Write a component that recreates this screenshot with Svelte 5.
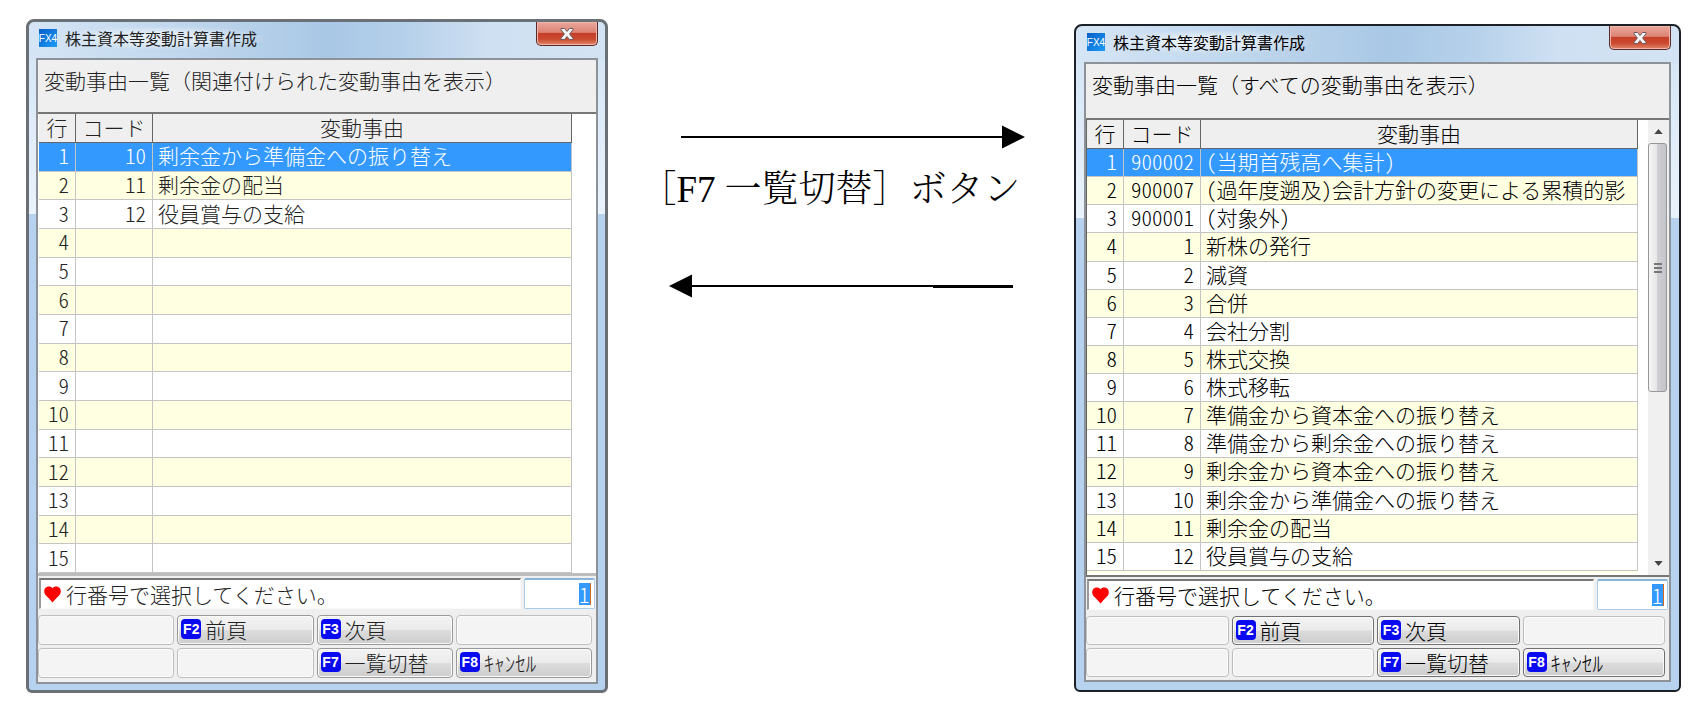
<script>
  const linked = [
    ['10', '剰余金から準備金への振り替え'],
    ['11', '剰余金の配当'],
    ['12', '役員賞与の支給']
  ];
  const all = [
    ['900002', '(当期首残高へ集計)'],
    ['900007', '(過年度遡及)会計方針の変更による累積的影'],
    ['900001', '(対象外)'],
    ['1', '新株の発行'],
    ['2', '減資'],
    ['3', '合併'],
    ['4', '会社分割'],
    ['5', '株式交換'],
    ['6', '株式移転'],
    ['7', '準備金から資本金への振り替え'],
    ['8', '準備金から剰余金への振り替え'],
    ['9', '剰余金から資本金への振り替え'],
    ['10', '剰余金から準備金への振り替え'],
    ['11', '剰余金の配当'],
    ['12', '役員賞与の支給']
  ];
  const pad = (rows) => Array.from({ length: 15 }, (_, i) => rows[i] ?? ['', '']);

  const windows = [
    { id: 'linked', heading: '変動事由一覧（関連付けられた変動事由を表示）', rows: pad(linked), scroll: false },
    { id: 'all', heading: '変動事由一覧（すべての変動事由を表示）', rows: pad(all), scroll: true }
  ];
  const keys = [
    null, ['F2', '前頁'], ['F3', '次頁'], null,
    null, null, ['F7', '一覧切替'], ['F8', 'ｷｬﾝｾﾙ']
  ];
</script>

{#snippet dialog(w)}
  <section class="window {w.id}">
    <header class="titlebar">
      <svg class="app" viewBox="0 0 18 18" aria-hidden="true">
        <defs>
          <linearGradient id="app-{w.id}" x1="0" y1="0" x2="1" y2="1">
            <stop offset="0" stop-color="#0a5fc8" />
            <stop offset="1" stop-color="#1b9bf5" />
          </linearGradient>
        </defs>
        <rect width="18" height="18" fill="url(#app-{w.id})" />
        <text x="9" y="13" text-anchor="middle" font-size="10" fill="#fff">FX4</text>
      </svg>
      <span class="title">株主資本等変動計算書作成</span>
      <button class="close" aria-label="閉じる">
        <svg viewBox="0 0 16 14" aria-hidden="true">
          <path d="M2 1.500h3.600L8 4.500l2.400-3H14v1.300L10.600 7 14 11.200v1.300h-3.600L8 9.500l-2.400 3H2v-1.300L5.400 7 2 2.800z" fill="#f4f4f4" stroke="#6b5a62" stroke-width="1" />
        </svg>
      </button>
    </header>
    <div class="panel">
      <h2>{w.heading}</h2>
      <div class="list">
        <table>
          <colgroup><col class="c-row" /><col class="c-code" /><col /></colgroup>
          <thead>
            <tr><th>行</th><th>コード</th><th>変動事由</th></tr>
          </thead>
          <tbody>
            {#each w.rows as row, i}
              <tr class:selected={i === 0}>
                <td class="num">{i + 1}</td>
                <td class="num">{row[0]}</td>
                <td class="reason">{row[1]}</td>
              </tr>
            {/each}
          </tbody>
        </table>
        {#if w.scroll}
          <div class="scroll">
            <button aria-label="上へ"><svg viewBox="0 0 10 6"><path d="M0 6 5 0l5 6z" fill="#444" /></svg></button>
            <div class="track">
              <div class="thumb"><i></i><i></i><i></i></div>
            </div>
            <button aria-label="下へ"><svg viewBox="0 0 10 6"><path d="M0 0h10L5 6z" fill="#444" /></svg></button>
          </div>
        {/if}
      </div>
      <div class="prompt">
        <label class="message" for="line-{w.id}">
          <svg viewBox="0 0 17 17" aria-hidden="true">
            <path d="M8.500 16.500 5 12.500 1.500 9C-.2 7-.2 3.500 1.500 1.800 3.600-.2 7-.1 8.500 2.300 10-.1 13.400-.2 15.500 1.800 17.200 3.500 17.200 7 15.500 9L12 12.500z" fill="#f00" />
          </svg>
          行番号で選択してください。
        </label>
        <div class="entry"><input id="line-{w.id}" type="text" value="1" /></div>
      </div>
      <div class="keys">
        {#each keys as key}
          {#if key}
            <button class="key"><b>{key[0]}</b>{key[1]}</button>
          {:else}
            <button class="key" disabled aria-label="未割当"></button>
          {/if}
        {/each}
      </div>
    </div>
  </section>
{/snippet}

<main>
  {@render dialog(windows[0])}
  <div class="switch">
    <svg class="arrow right" viewBox="0 0 344 24" aria-hidden="true">
      <path d="M0 11h322v2H0z" /><path d="M321 .500v23L344 12z" />
    </svg>
    <p>［<span>F7</span>一覧切替］ボタン</p>
    <svg class="arrow left" viewBox="0 0 344 24" aria-hidden="true">
      <path d="M22 11h322v2H22z" /><path d="M264 11h80v3h-80z" /><path d="M23 .500v23L0 12z" />
    </svg>
  </div>
  {@render dialog(windows[1])}
</main>

<style>
  :global(body) {
    margin: 0;
    background: #fff;
  }
  main {
    display: grid;
    grid-template-columns: 582fr 466fr 607fr;
    align-items: start;
    padding: 19px 14px 19px 26px;
    font-family: 'Noto Sans CJK JP', sans-serif;
    font-size: 21px;
    font-weight: 300;
    line-height: 24px;
    color: #000;
  }
  button, input {
    font: inherit;
    color: inherit;
  }
  .window {
    box-sizing: border-box;
    min-width: 0;
    border: 3px solid #6b7076;
    border-radius: 8px 8px 6px 6px;
    padding: 0 7px 6px;
    background:
      linear-gradient(90deg, #d5e5f5 0, #b9d2ea 35%, #a9c8e6 52%, #b5d0ea 65%, #cfe0f2 80%, #d3e3f3) 0 0 / 100% 38px no-repeat,
      linear-gradient(#d3e3f3 0, #eaf3fc 192px, #b7d2ee 192px);
  }
  .all {
    margin-top: 5px;
    border: 2px solid #1c2027;
    padding: 0 8px 8px;
  }
  .titlebar {
    display: flex;
    align-items: center;
    height: 32px;
    padding: 0 0 4px 3px;
    font-size: 16px;
    font-weight: 400;
  }
  .app {
    width: 18px;
    height: 18px;
    font-family: 'Liberation Sans', sans-serif;
  }
  .title {
    margin-left: 2px;
    padding: 0 12px 0 6px;
    background: radial-gradient(closest-side, #ffffff88 40%, #ffffff00);
  }
  .close {
    display: flex;
    align-items: center;
    justify-content: center;
    align-self: flex-start;
    width: 62px;
    height: 24px;
    margin-left: auto;
    padding: 0;
    border: 1px solid #5d2a2c;
    border-top: 0;
    border-radius: 0 0 5px 5px;
    box-shadow: inset 0 0 0 1px #f0b5a8;
    background: linear-gradient(#eaa99d 0, #dc8373 45%, #c53f28 50%, #cb4a30 75%, #e08a6b);
  }
  .close svg {
    width: 16px;
    height: 14px;
  }
  .panel {
    border: 2px solid #8c9298;
    background: #efefef;
  }
  .linked {
    color: #222;
  }
  h2 {
    margin: 0;
    padding: 8px 6px 20px;
    font-size: 21px;
    font-weight: 300;
    line-height: 24px;
    white-space: nowrap;
  }
  .all h2 {
    padding-bottom: 22px;
  }
  .list {
    display: flex;
    justify-content: space-between;
    height: 459px;
    padding-left: 1px;
    border-top: 2px solid #777;
    border-bottom: 3px solid #bdbdbd;
    background: #fff;
  }
  .all .list {
    height: 455px;
    border-bottom: 2px solid #777;
    border-left: 1px solid #666;
    padding-left: 0;
  }
  table {
    flex: 1;
    table-layout: fixed;
    width: 100%;
    height: 100%;
    margin-right: 24px;
    border-collapse: separate;
    border-spacing: 0;
  }
  .all table {
    height: 453px;
    margin-right: 10px;
    border-bottom: 2px solid #ffffe1;
  }
  .c-row {
    width: 37px;
  }
  .c-code {
    width: 77px;
  }
  th, td {
    padding: 0 0 3px;
    line-height: 22px;
    white-space: nowrap;
    border-right: 1px solid #c4c4c4;
    border-bottom: 1px solid #c4c4c4;
  }
  th {
    height: 25px;
    background: #efefef;
    border-color: #666;
    font-weight: 300;
  }
  .num {
    padding-right: 6px;
    text-align: right;
    font-feature-settings: 'hwid';
  }
  .reason {
    padding-left: 5px;
    font-feature-settings: 'hwid';
  }
  tbody tr:nth-child(even) {
    background: #ffffe1;
  }
  tbody .selected {
    background: #39f;
    color: #fff;
  }
  .scroll {
    display: flex;
    flex-direction: column;
    width: 21px;
    background: #f0f0f0;
  }
  .scroll button {
    display: flex;
    align-items: center;
    justify-content: center;
    height: 23px;
    padding: 0;
    border: 0;
    background: none;
  }
  .scroll svg {
    width: 9px;
    height: 5px;
  }
  .track {
    flex: 1;
  }
  .thumb {
    display: flex;
    flex-direction: column;
    align-items: center;
    justify-content: center;
    gap: 2px;
    box-sizing: border-box;
    width: 19px;
    height: 61%;
    border: 1px solid #979797;
    border-radius: 3px;
    background: linear-gradient(90deg, #f6f6f6 0, #e6e6e8 45%, #cfcfd4 50%, #c3c4ca);
  }
  .thumb i {
    width: 8px;
    height: 2px;
    background: #777;
  }
  .prompt {
    display: flex;
    gap: 3px;
    padding: 2px 1px 0;
  }
  .message {
    display: flex;
    flex: 1;
    align-items: center;
    gap: 5px;
    height: 28px;
    padding-left: 3px;
    border: 1px solid #fafafa;
    border-top: 2px solid #777;
    border-left: 2px solid #999;
    background: #fff;
    line-height: 26px;
    white-space: nowrap;
  }
  .message svg {
    width: 17px;
    height: 17px;
  }
  .entry {
    display: flex;
    align-items: center;
    justify-content: flex-end;
    width: 66px;
    padding-right: 3px;
    border: 1px solid #a9cbe8;
    border-top: 2px solid #8ab4d8;
    border-radius: 2px;
    background: #fff;
  }
  .entry input {
    box-sizing: border-box;
    width: 12px;
    height: 22px;
    padding: 0;
    border: 0;
    border-right: 1px solid #d2691e;
    outline: 0;
    background: #39f;
    color: #fff;
    font-feature-settings: 'hwid';
  }
  .keys {
    display: grid;
    grid-template-columns: repeat(4, 1fr);
    gap: 3px;
    padding: 6px 4px 4px 0;
  }
  .key {
    display: flex;
    align-items: center;
    gap: 4px;
    box-sizing: border-box;
    height: 30px;
    padding: 0 3px 2px;
    border: 1px solid #707070;
    border-radius: 4px;
    box-shadow: inset 0 0 0 1px #fafafa;
    background: linear-gradient(#f3f3f3 0, #ebebeb 48%, #dcdcdc 52%, #cdcdcd);
    white-space: nowrap;
  }
  .linked .key {
    border-color: #999;
  }
  .all .key {
    height: 29px;
  }
  .all .keys {
    padding-bottom: 3px;
  }
  .key:disabled,
  .linked .key:disabled {
    border-color: #bcc0c3;
    background: #f4f4f4;
  }
  .key b {
    width: 20px;
    height: 20px;
    border-radius: 4px;
    background: #0a0af0;
    color: #fff;
    font: bold 14px/20px 'Liberation Sans Narrow', 'Liberation Sans', sans-serif;
    text-align: center;
  }
  .switch {
    display: flex;
    flex-direction: column;
    align-items: center;
    padding-top: 106px;
  }
  .switch p {
    margin: 16px 22px 59px 0;
    font-family: 'Liberation Serif', 'Noto Serif CJK JP', 'Noto Sans CJK JP', serif;
    font-size: 37px;
    line-height: 50px;
    white-space: nowrap;
    color: #000;
  }
  .switch span {
    margin-right: 9px;
  }
  .arrow {
    width: 344px;
    height: 24px;
  }
  .right {
    margin-left: 24px;
  }
</style>
